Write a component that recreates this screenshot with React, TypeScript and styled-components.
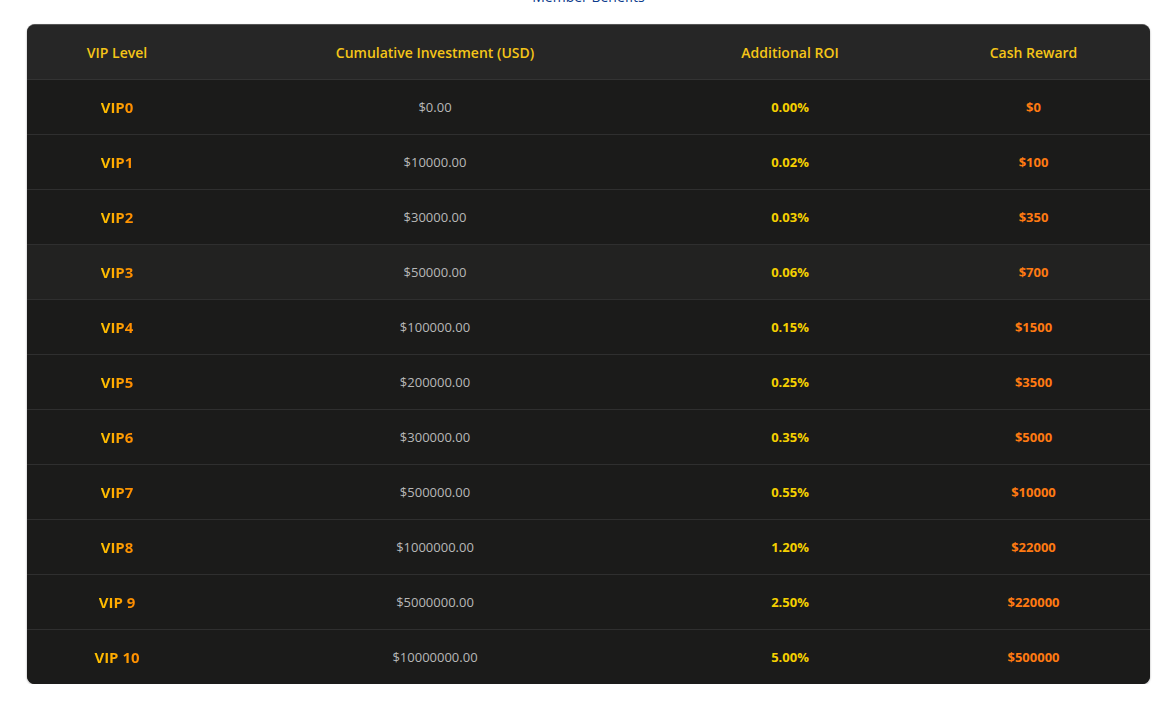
import React from "react";
import styled, { createGlobalStyle } from "styled-components";

const Global = createGlobalStyle`
  body { margin: 0; background: #fff; font-family: "Open Sans", "Noto Sans", sans-serif; }
`;

const Page = styled.div`
  padding: 0 24px 0 27px;
  width: 1123px;
`;

const Title = styled.div`
  text-align: center;
  color: #0b3b8c;
  font-size: 14px;
  line-height: 20px;
  margin-top: -13px;
  margin-bottom: 17px;
`;

const Table = styled.div`
  background: #1b1b1a;
  border-radius: 8px;
  overflow: hidden;
  border-top: 1px solid #555;
  box-shadow: 0 1px 2px rgba(0,0,0,0.4);
`;

const Row = styled.div<{ $head?: boolean; $hl?: boolean }>`
  display: grid;
  grid-template-columns: 180px 456px 254px 233px;
  height: 54px;
  align-items: center;
  background: ${p => (p.$head ? "#262626" : p.$hl ? "#222221" : "#1b1b1a")};
  border-bottom: 1px solid ${p => (p.$head ? "#333" : "#2f2f2f")};
  &:last-child { border-bottom: none; }
`;

const Cell = styled.div`
  text-align: center;
`;

const Head = styled(Cell)`
  color: #f5c518;
  font-size: 14px;
  font-weight: 600;
`;

const Level = styled.span`
  font-size: 15px;
  font-weight: 700;
  background: linear-gradient(90deg, #ffc400, #ff8a00);
  -webkit-background-clip: text;
  background-clip: text;
  color: transparent;
`;

const Amount = styled(Cell)`
  color: #b8b8b8;
  font-size: 13px;
`;

const Roi = styled(Cell)`
  color: #f5d000;
  font-size: 13px;
  font-weight: 700;
`;

const Cash = styled(Cell)`
  color: #ff7a12;
  font-size: 13px;
  font-weight: 700;
`;

const data: [string, string, string, string][] = [
  ["VIP0", "$0.00", "0.00%", "$0"],
  ["VIP1", "$10000.00", "0.02%", "$100"],
  ["VIP2", "$30000.00", "0.03%", "$350"],
  ["VIP3", "$50000.00", "0.06%", "$700"],
  ["VIP4", "$100000.00", "0.15%", "$1500"],
  ["VIP5", "$200000.00", "0.25%", "$3500"],
  ["VIP6", "$300000.00", "0.35%", "$5000"],
  ["VIP7", "$500000.00", "0.55%", "$10000"],
  ["VIP8", "$1000000.00", "1.20%", "$22000"],
  ["VIP 9", "$5000000.00", "2.50%", "$220000"],
  ["VIP 10", "$10000000.00", "5.00%", "$500000"],
];

export default function App() {
  return (
    <Page>
      <Global />
      <Title>Member Benefits</Title>
      <Table>
        <Row $head>
          <Head>VIP Level</Head>
          <Head>Cumulative Investment (USD)</Head>
          <Head>Additional ROI</Head>
          <Head>Cash Reward</Head>
        </Row>
        {data.map((d, i) => (
          <Row key={d[0]} $hl={i === 3}>
            <Cell><Level>{d[0]}</Level></Cell>
            <Amount>{d[1]}</Amount>
            <Roi>{d[2]}</Roi>
            <Cash>{d[3]}</Cash>
          </Row>
        ))}
      </Table>
    </Page>
  );
}
